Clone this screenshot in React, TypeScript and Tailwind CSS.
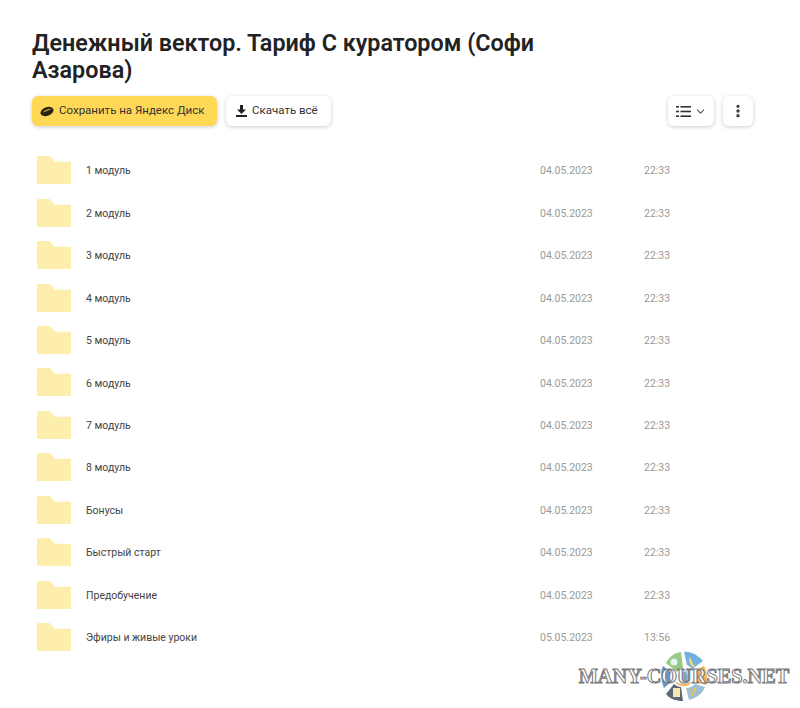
import { ChevronDown, EllipsisVertical } from "lucide-react";

const folders = [
  { name: "1 модуль", date: "04.05.2023", time: "22:33" },
  { name: "2 модуль", date: "04.05.2023", time: "22:33" },
  { name: "3 модуль", date: "04.05.2023", time: "22:33" },
  { name: "4 модуль", date: "04.05.2023", time: "22:33" },
  { name: "5 модуль", date: "04.05.2023", time: "22:33" },
  { name: "6 модуль", date: "04.05.2023", time: "22:33" },
  { name: "7 модуль", date: "04.05.2023", time: "22:33" },
  { name: "8 модуль", date: "04.05.2023", time: "22:33" },
  { name: "Бонусы", date: "04.05.2023", time: "22:33" },
  { name: "Быстрый старт", date: "04.05.2023", time: "22:33" },
  { name: "Предобучение", date: "04.05.2023", time: "22:33" },
  { name: "Эфиры и живые уроки", date: "05.05.2023", time: "13:56" },
];

function FolderIcon() {
  return (
    <svg width="34" height="28" viewBox="0 0 34 28" className="shrink-0">
      <path
        d="M0 1.5C0 .7.7 0 1.5 0h10c1 0 1.700.4 2.300 1l3.200 3.800c.5.6 1 .9 1.800.9H33c.6 0 1 .4 1 1V27c0 .6-.4 1-1 1H1c-.6 0-1-.4-1-1V1.500z"
        fill="#fdeeae"
      />
    </svg>
  );
}

function ListIcon() {
  return (
    <svg width="15" height="11" viewBox="0 0 15 11" fill="#333">
      <rect x="0" y="0" width="3" height="1.600" />
      <rect x="4.500" y="0" width="10.500" height="1.600" />
      <rect x="0" y="4.700" width="3" height="1.600" />
      <rect x="4.500" y="4.700" width="10.500" height="1.600" />
      <rect x="0" y="9.400" width="3" height="1.600" />
      <rect x="4.500" y="9.400" width="10.500" height="1.600" />
    </svg>
  );
}

function SaveIcon() {
  return (
    <svg width="14" height="11" viewBox="0 0 14 11" className="shrink-0">
      <ellipse cx="7" cy="5.500" rx="6.800" ry="4.300" transform="rotate(-22 7 5.500)" fill="#2b2412" />
      <path d="M3 6.500C5 4 8 2.800 11.500 3 9.500 3.800 6 5 3 6.500z" fill="#ffdb4d" />
    </svg>
  );
}

function DownloadIcon() {
  return (
    <svg width="11" height="12" viewBox="0 0 11 12" fill="#222" className="shrink-0">
      <path d="M4 0h3v4.500h3L5.500 9 1 4.500h3z" />
      <rect x="0" y="10" width="11" height="2" />
    </svg>
  );
}

function WatermarkLogo() {
  return (
    <svg width="48" height="50" viewBox="0 0 48 50">
      <path d="M21 1C14 2 9 6 6 12l11 9c1-2 3-4 6-4z" fill="#86c06a" />
      <circle cx="14" cy="11" r="3.500" fill="#e3f1f4" />
      <path d="M24 1c6-1 14 3 19 9l-11 8c-1-2-3-3-5-4z" fill="#5aa3d8" />
      <path d="M30 6l3 7 2 2-2 1-3-3-1-5z" fill="#f3d25b" />
      <path d="M36 19l8-4c3 6 4 13 2 19l-11-3c1-3 2-8 1-12z" fill="#f0a63c" />
      <path d="M35 33l10 3c-2 6-8 11-16 13l-3-12c4 0 7-2 9-4z" fill="#8fb4cc" />
      <path d="M27 38l2 2v6h1v-7h1v6h2v-7l3-2v6h-1" fill="#d9b64d" />
      <path d="M21 36l2 14c-7 0-13-2-17-7l8-10c2 1 4 3 7 3z" fill="#3f4d5e" />
      <rect x="13" y="37" width="7" height="9" fill="#f4e3a0" />
      <path d="M3 15l8 6c-1 3-1 7 0 10l-7 6C1 30 0 21 3 15z" fill="#4f82b5" />
      <ellipse cx="24" cy="26" rx="6" ry="8" fill="#bfd4e6" />
      <ellipse cx="24" cy="26" rx="3.500" ry="5.500" fill="#6f95bd" />
      <path d="M15 31c3 5 13 6 17 0l-2 0c-3 3-10 3-13 0z" fill="#f0a63c" />
    </svg>
  );
}

export default function App() {
  return (
    <div className="relative h-[708px] w-[800px] overflow-hidden bg-white font-['Roboto',sans-serif] text-[#222]">
      <div className="pl-8 pr-[47px] pt-[30px]">
        <h1 className="w-[520px] text-[23.35px] font-semibold leading-[27px] text-[#222]">
          Денежный вектор. Тариф С куратором (Софи Азарова)
        </h1>

        <div className="mt-[12px] flex items-center">
          <button className="flex h-[30px] w-[185px] items-center gap-[5px] whitespace-nowrap rounded-[6px] bg-[#ffd856] pl-[8px] text-[11.5px] text-[#333] shadow-[0_1px_4px_rgba(0,0,0,0.2)]">
            <SaveIcon />
            Сохранить на Яндекс Диск
          </button>
          <button className="ml-[9px] flex h-[30px] w-[105px] items-center gap-[5px] rounded-[6px] bg-white pl-[10px] text-[11.5px] text-[#333] shadow-[0_1px_4px_rgba(0,0,0,0.2)]">
            <DownloadIcon />
            Скачать всё
          </button>
          <button className="ml-auto flex h-[30px] w-[46px] items-center justify-center gap-[3px] rounded-[6px] bg-white shadow-[0_1px_4px_rgba(0,0,0,0.2)]">
            <ListIcon />
            <ChevronDown size={13} className="text-[#555]" />
          </button>
          <button className="ml-[9px] flex h-[30px] w-[30px] items-center justify-center rounded-[6px] bg-white shadow-[0_1px_4px_rgba(0,0,0,0.2)]">
            <EllipsisVertical size={16} strokeWidth={3} className="text-[#333]" />
          </button>
        </div>

        <div className="mt-[23px]">
          {folders.map((folder) => (
            <div key={folder.name} className="flex h-[42.45px] items-center pl-[5px]">
              <FolderIcon />
              <span className="ml-[15px] mt-[2px] w-[454px] text-[10.500px] text-[#444]">{folder.name}</span>
              <span className="mt-[2px] w-[104px] text-[10.500px] text-[#9a9a9a]">{folder.date}</span>
              <span className="mt-[2px] text-[10.500px] text-[#9a9a9a]">{folder.time}</span>
            </div>
          ))}
        </div>
      </div>

      {/* watermark */}
      <div className="absolute left-[578px] top-[651px] flex h-[50px] w-[212px] items-center justify-center">
        <div className="absolute left-[82px] top-0 opacity-85">
          <WatermarkLogo />
        </div>
        <span className="relative whitespace-nowrap font-['Liberation_Serif',serif] text-[20.3px] font-bold text-white [-webkit-text-stroke:1px_#777]">
          MANY-COURSES.NET
        </span>
      </div>
    </div>
  );
}
